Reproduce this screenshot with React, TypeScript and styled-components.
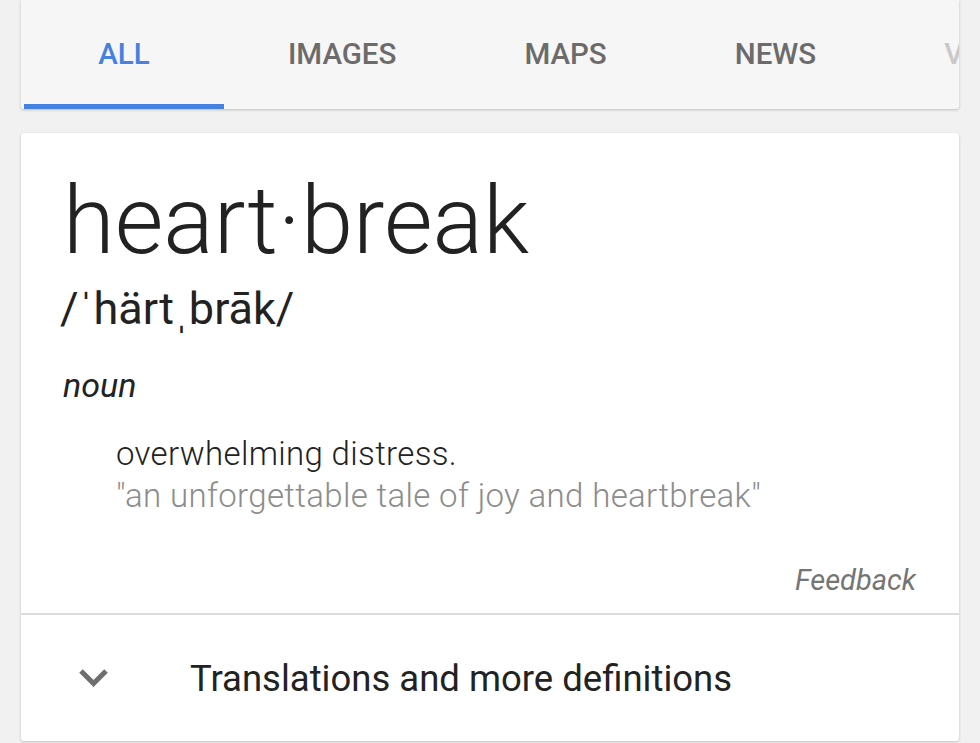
import React from "react";
import styled, { createGlobalStyle } from "styled-components";

const Global = createGlobalStyle`
  html, body { margin: 0; padding: 0; background: #f1f1f1; }
  body { font-family: Roboto, "Liberation Sans", Arial, sans-serif; overflow: hidden; }
`;

const Page = styled.div`
  width: 980px;
  height: 743px;
  padding: 0 21px 0 21px;
  box-sizing: border-box;
  display: flex;
  flex-direction: column;
  gap: 24px;
`;

const TabBar = styled.nav`
  flex: none;
  height: 109px;
  background: #f6f6f6;
  border-radius: 0 0 3px 3px;
  box-shadow: 0 1px 3px rgba(0, 0, 0, 0.22);
  display: flex;
  padding-left: 3px;
  overflow: hidden;
`;

const Tab = styled.div<{ $active?: boolean }>`
  flex: none;
  min-width: ${(p) => (p.$active ? "200px" : "auto")};
  padding: 3px ${(p) => (p.$active ? "0" : "64px")} 0;
  display: flex;
  align-items: center;
  justify-content: center;
  font-size: 29.5px;
  font-weight: 500;
  color: ${(p) => (p.$active ? "#4581de" : "#6b6b6b")};
  border-bottom: 5px solid ${(p) => (p.$active ? "#4581de" : "transparent")};
  box-sizing: border-box;
  white-space: nowrap;
`;

const FadedTab = styled(Tab)`
  color: #c9c9c9;
  padding-right: 0;
`;

const Card = styled.section`
  flex: none;
  background: #fff;
  border-radius: 3px;
  box-shadow: 0 1px 3px rgba(0, 0, 0, 0.2);
  display: flex;
  flex-direction: column;
`;

const Body = styled.div`
  padding: 33px 43px 15px 42px;
  display: flex;
  flex-direction: column;
`;

const Word = styled.h1`
  margin: 0;
  font-size: 94px;
  font-weight: 300;
  line-height: 110px;
  color: #222;
`;

const Phonetic = styled.div`
  margin-top: 5px;
  margin-left: -3px;
  font-size: 45px;
  font-weight: 400;
  color: #222;
  line-height: 56px;
`;

const Pos = styled.div`
  margin-top: 28px;
  font-size: 34px;
  font-style: italic;
  color: #222;
  line-height: 40px;
`;

const Definition = styled.div`
  margin-top: 28px;
  padding-left: 53px;
  display: flex;
  flex-direction: column;
`;

const Line = styled.div<{ $muted?: boolean }>`
  font-size: 33px;
  font-weight: 300;
  letter-spacing: 0.35px;
  color: ${(p) => (p.$muted ? "#8c8c8c" : "#222")};
  line-height: 42px;
`;

const Feedback = styled.div`
  margin-top: 45px;
  align-self: flex-end;
  font-size: 29px;
  font-style: italic;
  color: #757575;
  line-height: 36px;
`;

const Divider = styled.div`
  height: 2px;
  background: #dcdcdc;
`;

const More = styled.div`
  height: 126px;
  display: flex;
  align-items: center;
  padding-left: 57px;
  gap: 81px;
`;

const MoreText = styled.span`
  font-size: 36.5px;
  color: #222;
`;

const Chevron = () => (
  <svg width="31" height="20" viewBox="0 0 31 20">
    <path d="M3 3 L15.5 15.5 L28 3" fill="none" stroke="#6e6e6e" strokeWidth="5" />
  </svg>
);

export default function App() {
  return (
    <>
      <Global />
      <Page>
        <TabBar>
          <Tab $active>ALL</Tab>
          <Tab>IMAGES</Tab>
          <Tab>MAPS</Tab>
          <Tab>NEWS</Tab>
          <FadedTab>VIDEOS</FadedTab>
        </TabBar>
        <Card>
          <Body>
            <Word>heart·break</Word>
            <Phonetic>/ˈhärtˌbrāk/</Phonetic>
            <Pos>noun</Pos>
            <Definition>
              <Line>overwhelming distress.</Line>
              <Line $muted>"an unforgettable tale of joy and heartbreak"</Line>
            </Definition>
            <Feedback>Feedback</Feedback>
          </Body>
          <Divider />
          <More>
            <Chevron />
            <MoreText>Translations and more definitions</MoreText>
          </More>
        </Card>
      </Page>
    </>
  );
}
